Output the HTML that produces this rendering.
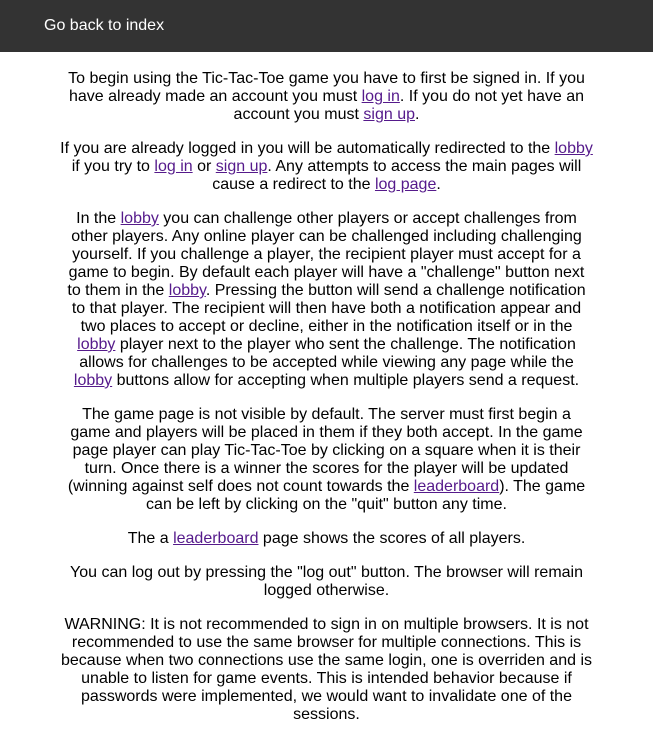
<!DOCTYPE html>
<html><head><meta charset="utf-8"><style>
body{margin:0;font-family:"Liberation Sans",Arial,sans-serif;font-size:16px;line-height:18px;color:#000;background:#fff}
.hdr{background:#333;height:52px;}
.hdr a{color:#fff;text-decoration:none;position:absolute;left:44px;top:17px;line-height:18px}
.c{width:600px;margin:0 auto;text-align:center;padding-top:2px;white-space:nowrap}
p{margin:16px 0}
a.l{color:#551a8b}
</style></head><body>
<div class="hdr"><a href="#">Go back to index</a></div>
<div class="c">
<p>To begin using the Tic-Tac-Toe game you have to first be signed in. If you<br>have already made an account you must <a class="l" href="#">log in</a>. If you do not yet have an<br>account you must <a class="l" href="#">sign up</a>.</p>
<p>If you are already logged in you will be automatically redirected to the <a class="l" href="#">lobby</a><br>if you try to <a class="l" href="#">log in</a> or <a class="l" href="#">sign up</a>. Any attempts to access the main pages will<br>cause a redirect to the <a class="l" href="#">log page</a>.</p>
<p>In the <a class="l" href="#">lobby</a> you can challenge other players or accept challenges from<br>other players. Any online player can be challenged including challenging<br>yourself. If you challenge a player, the recipient player must accept for a<br>game to begin. By default each player will have a "challenge" button next<br>to them in the <a class="l" href="#">lobby</a>. Pressing the button will send a challenge notification<br>to that player. The recipient will then have both a notification appear and<br>two places to accept or decline, either in the notification itself or in the<br><a class="l" href="#">lobby</a> player next to the player who sent the challenge. The notification<br>allows for challenges to be accepted while viewing any page while the<br><a class="l" href="#">lobby</a> buttons allow for accepting when multiple players send a request.</p>
<p>The game page is not visible by default. The server must first begin a<br>game and players will be placed in them if they both accept. In the game<br>page player can play Tic-Tac-Toe by clicking on a square when it is their<br>turn. Once there is a winner the scores for the player will be updated<br>(winning against self does not count towards the <a class="l" href="#">leaderboard</a>). The game<br>can be left by clicking on the "quit" button any time.</p>
<p>The a <a class="l" href="#">leaderboard</a> page shows the scores of all players.</p>
<p>You can log out by pressing the "log out" button. The browser will remain<br>logged otherwise.</p>
<p>WARNING: It is not recommended to sign in on multiple browsers. It is not<br>recommended to use the same browser for multiple connections. This is<br>because when two connections use the same login, one is overriden and is<br>unable to listen for game events. This is intended behavior because if<br>passwords were implemented, we would want to invalidate one of the<br>sessions.</p>
</div>
</body></html>
